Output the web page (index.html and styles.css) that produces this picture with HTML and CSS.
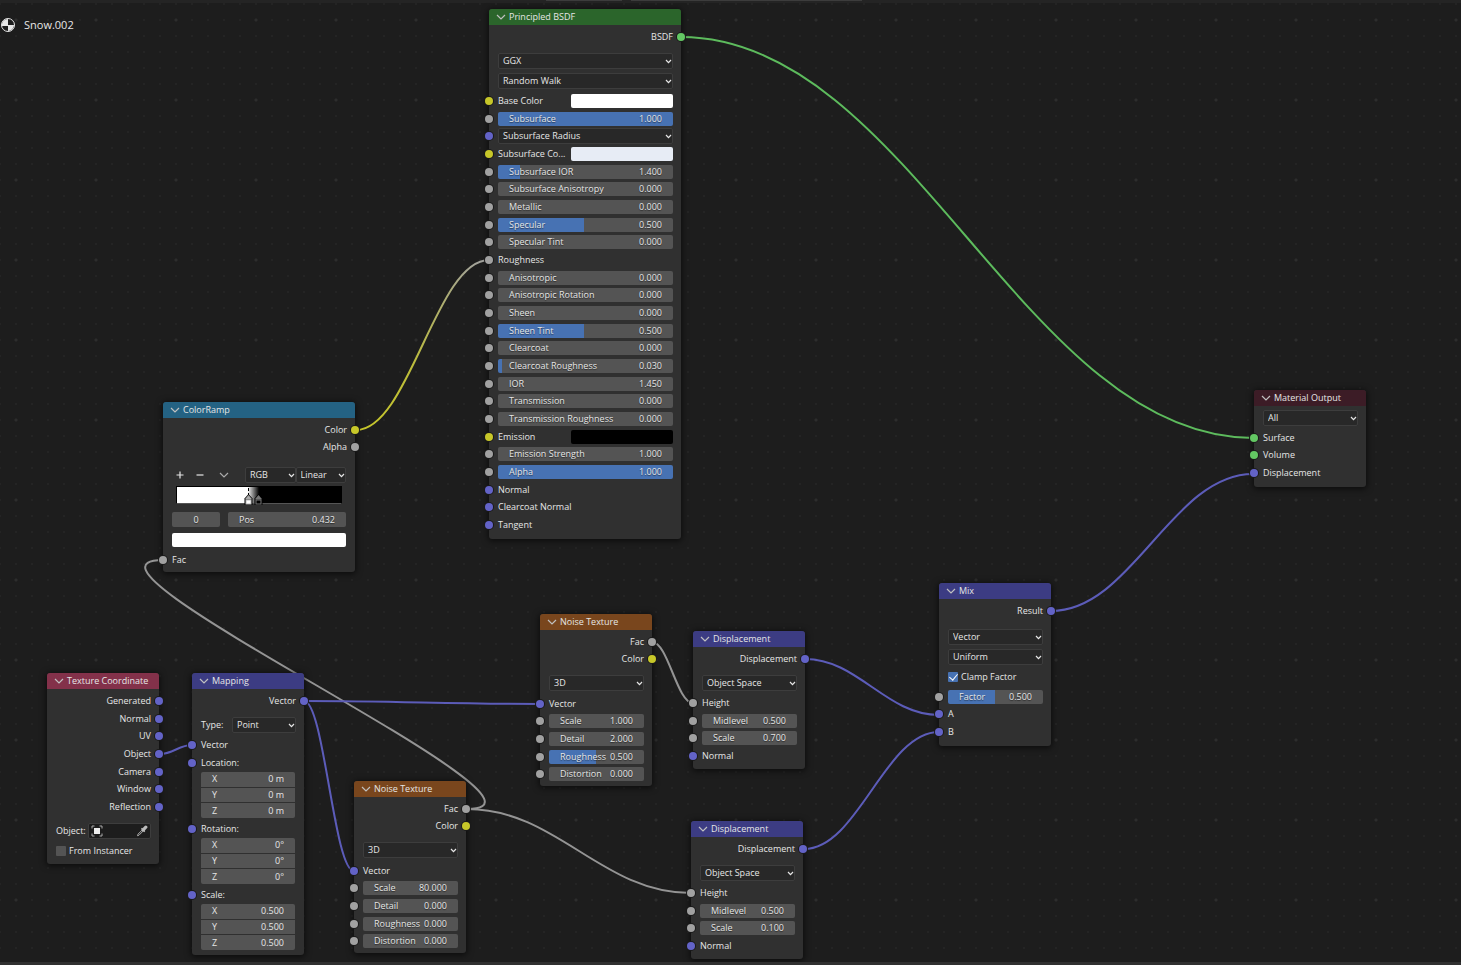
FILE: index.html
```html
<!DOCTYPE html>
<html lang="en">
<head>
<meta charset="utf-8">
<title>Snow.002 – Shader Editor</title>
<link rel="stylesheet" href="styles.css">
</head>
<body>
<svg class="symbols" aria-hidden="true">
  <symbol id="fold" viewBox="0 0 10 8"><path d="M1 2 L5 6 L9 2" fill="none" stroke="currentColor" stroke-width="1.2"/></symbol>
  <symbol id="caret" viewBox="0 0 7 5"><path d="M1 1 L3.5 3.7 L6 1" fill="none" stroke="currentColor" stroke-width="1.2"/></symbol>
</svg>
<main class="editor">
  <svg class="links" aria-hidden="true">
    <defs>
      <linearGradient id="mixlink" gradientUnits="userSpaceOnUse" x1="356" y1="430" x2="489" y2="260">
        <stop offset="0" stop-color="#c7c729"/><stop offset="0.4" stop-color="#bcbc3c"/><stop offset="1" stop-color="#a1a1a1"/>
      </linearGradient>
    </defs>
    <path class="shader" d="M681 37 C909 37 1025 438 1253 438"/>
    <path stroke="url(#mixlink)" d="M356 430 C409 430 436 260 489 260"/>
    <path class="value" d="M467 809 C589 809 41 560 163 560"/>
    <path class="value" d="M467 809 C557 809 601 893 691 893"/>
    <path class="value" d="M652 642 C668 642 677 703 693 703"/>
    <path class="vector" d="M160 754 C173 754 179 745 192 745"/>
    <path class="vector" d="M304 701 C398 701 446 704 540 704"/>
    <path class="vector" d="M304 701 C324 701 334 871 354 871"/>
    <path class="vector" d="M805 659 C858 659 886 715 939 715"/>
    <path class="vector" d="M804 849 C858 849 885 732 939 732"/>
    <path class="vector" d="M1051 611 C1132 611 1172 474 1253 474"/>
  </svg>

  <div class="material">
    <svg width="14" height="14" viewBox="0 0 14 14" aria-hidden="true"><circle cx="7" cy="7" r="6.5" fill="#1d1d1d" stroke="#e6e6e6"/><path d="M1 8 A6 6 0 0 1 7 1 V8 Z M7 7 H13 A6 6 0 0 1 7 13 Z" fill="#e6e6e6"/></svg>
    <span>Snow.002</span>
  </div>

  <section class="node wide principled">
    <h2 class="head green"><svg><use href="#fold"/></svg>Principled BSDF</h2>
    <div class="sockets n1"><div class="row out s-shader">BSDF</div></div>
    <div class="options">
      <div class="opt"><label class="drop"><select aria-label="Distribution"><option>GGX</option></select><svg><use href="#caret"/></svg></label></div>
      <div class="opt"><label class="drop"><select aria-label="Subsurface method"><option>Random Walk</option></select><svg><use href="#caret"/></svg></label></div>
    </div>
    <div class="sockets n25">
      <div class="row in s-color"><label for="base">Base Color</label><input type="color" id="base" value="#ffffff"></div>
      <div class="row in s-value"><label class="num full"><span>Subsurface</span><input value="1.000"></label></div>
      <div class="row in s-vector"><label class="drop"><select aria-label="Subsurface Radius"><option>Subsurface Radius</option></select><svg><use href="#caret"/></svg></label></div>
      <div class="row in s-color"><label for="subc">Subsurface Co...</label><input type="color" id="subc" value="#e7ecf5"></div>
      <div class="row in s-value"><label class="num" style="--fill:12.5%"><span>Subsurface IOR</span><input value="1.400"></label></div>
      <div class="row in s-value"><label class="num"><span>Subsurface Anisotropy</span><input value="0.000"></label></div>
      <div class="row in s-value"><label class="num"><span>Metallic</span><input value="0.000"></label></div>
      <div class="row in s-value"><label class="num half"><span>Specular</span><input value="0.500"></label></div>
      <div class="row in s-value"><label class="num"><span>Specular Tint</span><input value="0.000"></label></div>
      <div class="row in s-value">Roughness</div>
      <div class="row in s-value"><label class="num"><span>Anisotropic</span><input value="0.000"></label></div>
      <div class="row in s-value"><label class="num"><span>Anisotropic Rotation</span><input value="0.000"></label></div>
      <div class="row in s-value"><label class="num"><span>Sheen</span><input value="0.000"></label></div>
      <div class="row in s-value"><label class="num half"><span>Sheen Tint</span><input value="0.500"></label></div>
      <div class="row in s-value"><label class="num"><span>Clearcoat</span><input value="0.000"></label></div>
      <div class="row in s-value"><label class="num" style="--fill:2.5%"><span>Clearcoat Roughness</span><input value="0.030"></label></div>
      <div class="row in s-value"><label class="num"><span>IOR</span><input value="1.450"></label></div>
      <div class="row in s-value"><label class="num"><span>Transmission</span><input value="0.000"></label></div>
      <div class="row in s-value"><label class="num"><span>Transmission Roughness</span><input value="0.000"></label></div>
      <div class="row in s-color"><label for="emis">Emission</label><input type="color" id="emis" value="#000000"></div>
      <div class="row in s-value"><label class="num"><span>Emission Strength</span><input value="1.000"></label></div>
      <div class="row in s-value"><label class="num full"><span>Alpha</span><input value="1.000"></label></div>
      <div class="row in s-vector">Normal</div>
      <div class="row in s-vector">Clearcoat Normal</div>
      <div class="row in s-vector">Tangent</div>
    </div>
  </section>

  <section class="node wide ramp-node">
    <h2 class="head blue"><svg><use href="#fold"/></svg>ColorRamp</h2>
    <div class="sockets n2"><div class="row out s-color">Color</div><div class="row out s-value">Alpha</div></div>
    <div class="ramp-tools">
      <button aria-label="Add stop"><svg viewBox="0 0 8 8"><path d="M4 0.5V7.5M0.5 4H7.5" stroke="currentColor" stroke-width="1.2"/></svg></button>
      <button aria-label="Remove stop"><svg viewBox="0 0 8 8"><path d="M0.5 4H7.5" stroke="currentColor" stroke-width="1.2"/></svg></button>
      <button class="more" aria-label="Ramp tools"><svg viewBox="0 0 10 8"><use href="#fold"/></svg></button>
      <label class="drop"><select aria-label="Color mode"><option>RGB</option></select><svg><use href="#caret"/></svg></label>
      <label class="drop"><select aria-label="Interpolation"><option>Linear</option></select><svg><use href="#caret"/></svg></label>
    </div>
    <div class="ramp">
      <svg class="stops" width="20" height="18" viewBox="0 0 20 18" aria-hidden="true">
        <path d="M5.5 1V9" stroke="#000" stroke-dasharray="3 2"/>
        <path d="M15.500 7 L19.500 11.500 V18 H11.500 V11.500 Z" fill="#000"/><path d="M15.500 8 L18.500 11.500 V12.500 H12.500 V11.500 Z" fill="#777"/><rect x="13" y="13" width="5" height="4" fill="#000" stroke="#777"/>
        <path d="M5.500 7 L9.500 11.500 V18 H1.500 V11.500 Z" fill="#000"/><path d="M5.500 8 L8.500 11.500 V12.500 H2.500 V11.500 Z" fill="#aaa"/><rect x="3" y="13" width="5" height="4" fill="#fff" stroke="#bbb"/>
      </svg>
    </div>
    <div class="ramp-pos"><label class="num index"><input aria-label="Stop" value="0"></label><label class="num"><span>Pos</span><input value="0.432"></label></div>
    <input class="stop-color" type="color" aria-label="Stop color" value="#ffffff">
    <div class="sockets n1"><div class="row in s-value">Fac</div></div>
  </section>

  <section class="node texcoord">
    <h2 class="head red"><svg><use href="#fold"/></svg>Texture Coordinate</h2>
    <div class="sockets n7">
      <div class="row out s-vector">Generated</div><div class="row out s-vector">Normal</div><div class="row out s-vector">UV</div><div class="row out s-vector">Object</div><div class="row out s-vector">Camera</div><div class="row out s-vector">Window</div><div class="row out s-vector">Reflection</div>
    </div>
    <div class="options">
      <div class="opt"><span class="tag">Object:</span>
        <button class="picker" aria-label="Pick object">
          <svg width="12" height="12" viewBox="0 0 12 12"><path d="M1 3.5V1H3.5M8.500 1H11V3.500M11 8.500V11H8.500M3.500 11H1V8.500" fill="none" stroke="#aaa"/><rect x="3" y="3" width="6" height="6" fill="#eee"/></svg>
          <svg width="12" height="12" viewBox="0 0 12 12"><path d="M7 4.200 L2 9.200 L1.500 10.700 L3 10.200 L8 5.200" fill="none" stroke="#aaa"/><path d="M5.500 3.300 L8.800 6.600" stroke="#bbb" stroke-width="1.500"/><path d="M7.200 4.800 L9.800 2.200" stroke="#bbb" stroke-width="3.200" stroke-linecap="round"/></svg>
        </button></div>
      <div class="opt"><label class="check"><input type="checkbox">From Instancer</label></div>
    </div>
  </section>

  <section class="node mapping">
    <h2 class="head purple"><svg><use href="#fold"/></svg>Mapping</h2>
    <div class="sockets n1"><div class="row out s-vector">Vector</div></div>
    <div class="options"><div class="opt"><label class="tag" for="maptype">Type:</label><span class="drop"><select id="maptype"><option>Point</option></select><svg><use href="#caret"/></svg></span></div></div>
    <div class="sockets n1"><div class="row in s-vector">Vector</div></div>
    <div class="sockets n1"><div class="row in s-vector">Location:</div></div>
    <div class="xyz"><label><span>X</span><input value="0 m"></label><label><span>Y</span><input value="0 m"></label><label><span>Z</span><input value="0 m"></label></div>
    <div class="sockets n1"><div class="row in s-vector">Rotation:</div></div>
    <div class="xyz"><label><span>X</span><input value="0°"></label><label><span>Y</span><input value="0°"></label><label><span>Z</span><input value="0°"></label></div>
    <div class="sockets n1"><div class="row in s-vector">Scale:</div></div>
    <div class="xyz"><label><span>X</span><input value="0.500"></label><label><span>Y</span><input value="0.500"></label><label><span>Z</span><input value="0.500"></label></div>
  </section>

  <section class="node noise noise-a">
    <h2 class="head orange"><svg><use href="#fold"/></svg>Noise Texture</h2>
    <div class="sockets n2"><div class="row out s-value">Fac</div><div class="row out s-color">Color</div></div>
    <div class="options"><div class="opt"><label class="drop"><select aria-label="Dimensions"><option>3D</option></select><svg><use href="#caret"/></svg></label></div></div>
    <div class="sockets n5">
      <div class="row in s-vector">Vector</div>
      <div class="row in s-value"><label class="num"><span>Scale</span><input value="80.000"></label></div>
      <div class="row in s-value"><label class="num"><span>Detail</span><input value="0.000"></label></div>
      <div class="row in s-value"><label class="num"><span>Roughness</span><input value="0.000"></label></div>
      <div class="row in s-value"><label class="num"><span>Distortion</span><input value="0.000"></label></div>
    </div>
  </section>

  <section class="node noise noise-b">
    <h2 class="head orange"><svg><use href="#fold"/></svg>Noise Texture</h2>
    <div class="sockets n2"><div class="row out s-value">Fac</div><div class="row out s-color">Color</div></div>
    <div class="options"><div class="opt"><label class="drop"><select aria-label="Dimensions"><option>3D</option></select><svg><use href="#caret"/></svg></label></div></div>
    <div class="sockets n5">
      <div class="row in s-vector">Vector</div>
      <div class="row in s-value"><label class="num"><span>Scale</span><input value="1.000"></label></div>
      <div class="row in s-value"><label class="num"><span>Detail</span><input value="2.000"></label></div>
      <div class="row in s-value"><label class="num half"><span>Roughness</span><input value="0.500"></label></div>
      <div class="row in s-value"><label class="num"><span>Distortion</span><input value="0.000"></label></div>
    </div>
  </section>

  <section class="node disp disp-a">
    <h2 class="head purple"><svg><use href="#fold"/></svg>Displacement</h2>
    <div class="sockets n1"><div class="row out s-vector">Displacement</div></div>
    <div class="options"><div class="opt"><label class="drop"><select aria-label="Space"><option>Object Space</option></select><svg><use href="#caret"/></svg></label></div></div>
    <div class="sockets n4">
      <div class="row in s-value">Height</div>
      <div class="row in s-value"><label class="num"><span>Midlevel</span><input value="0.500"></label></div>
      <div class="row in s-value"><label class="num"><span>Scale</span><input value="0.700"></label></div>
      <div class="row in s-vector">Normal</div>
    </div>
  </section>

  <section class="node disp disp-b">
    <h2 class="head purple"><svg><use href="#fold"/></svg>Displacement</h2>
    <div class="sockets n1"><div class="row out s-vector">Displacement</div></div>
    <div class="options"><div class="opt"><label class="drop"><select aria-label="Space"><option>Object Space</option></select><svg><use href="#caret"/></svg></label></div></div>
    <div class="sockets n4">
      <div class="row in s-value">Height</div>
      <div class="row in s-value"><label class="num"><span>Midlevel</span><input value="0.500"></label></div>
      <div class="row in s-value"><label class="num"><span>Scale</span><input value="0.100"></label></div>
      <div class="row in s-vector">Normal</div>
    </div>
  </section>

  <section class="node mix">
    <h2 class="head purple"><svg><use href="#fold"/></svg>Mix</h2>
    <div class="sockets n1"><div class="row out s-vector">Result</div></div>
    <div class="options">
      <div class="opt"><label class="drop"><select aria-label="Data type"><option>Vector</option></select><svg><use href="#caret"/></svg></label></div>
      <div class="opt"><label class="drop"><select aria-label="Factor mode"><option>Uniform</option></select><svg><use href="#caret"/></svg></label></div>
      <div class="opt"><label class="check"><input type="checkbox" checked>Clamp Factor</label></div>
    </div>
    <div class="sockets n3">
      <div class="row in s-value"><label class="num half"><span>Factor</span><input value="0.500"></label></div>
      <div class="row in s-vector">A</div>
      <div class="row in s-vector">B</div>
    </div>
  </section>

  <section class="node output">
    <h2 class="head maroon"><svg><use href="#fold"/></svg>Material Output</h2>
    <div class="options"><div class="opt"><label class="drop"><select aria-label="Target"><option>All</option></select><svg><use href="#caret"/></svg></label></div></div>
    <div class="sockets n3">
      <div class="row in s-shader">Surface</div>
      <div class="row in s-shader">Volume</div>
      <div class="row in s-vector">Displacement</div>
    </div>
  </section>
</main>
</body>
</html>
```
FILE: styles.css
```css
* { box-sizing: border-box; }

body {
  margin: 0;
  background: #1d1d1d;
  color: #e6e6e6;
  font: 9px/12px "Open Sans", "Noto Sans", sans-serif;
}

.symbols { display: none; }

/* Canvas with its dot grid; the first two layers are the header edge */
.editor {
  position: relative;
  height: 100vh;
  overflow: hidden;
  border-bottom: 3px solid #303030;
  background-color: #1d1d1d;
  background-image:
    linear-gradient(to right, transparent 546px, #3c3c3c 546px, #3c3c3c 622px, transparent 622px, transparent 631px, #3c3c3c 631px, #3c3c3c 862px, transparent 862px),
    linear-gradient(#242424, #242424),
    radial-gradient(circle, #2d2d2d 1px, transparent 2px),
    radial-gradient(circle, #242424 1px, transparent 1px);
  background-size: 100% 1px, 100% 3px, 80px 80px, 16px 16px;
  background-position: 0 0, 0 0, 56px 60px, 8px 12px;
  background-repeat: no-repeat, no-repeat, repeat, repeat;
}

.links {
  position: absolute;
  top: 0;
  left: 0;
  width: 100%;
  height: 100%;
  overflow: visible;
  fill: none;
  stroke-width: 2px;
}
.links .shader { stroke: #5dbb5d; }
.links .value { stroke: #949494; }
.links .vector { stroke: #5c5cb9; }

.material {
  display: flex;
  align-items: center;
  gap: 9px;
  padding: 17px 1px;
  font-size: 11px;
  line-height: 16px;
}

/* Nodes: free placement on the canvas */
.node {
  position: absolute;
  width: 112px;
  padding-bottom: 5px;
  border-radius: 3px;
  background: #303030;
  box-shadow: 0 1px 6px 1px rgba(0, 0, 0, 0.6);
}
.wide { width: 192px; }

.principled { left: 489px; top: 9px; }
.ramp-node { left: 163px; top: 402px; padding-bottom: 3px; }
.texcoord { left: 47px; top: 673px; padding-bottom: 2px; }
.mapping { left: 192px; top: 673px; }
.noise-a { left: 354px; top: 781px; }
.noise-b { left: 540px; top: 614px; }
.disp-a { left: 693px; top: 631px; }
.disp-b { left: 691px; top: 821px; }
.mix { left: 939px; top: 583px; }
.output { left: 1254px; top: 390px; }
.noise { padding-bottom: 3px; }
.disp { padding-bottom: 4px; }

.head {
  display: flex;
  align-items: center;
  gap: 3px;
  height: 16px;
  margin: 0 0 3px;
  padding-left: 7px;
  border-radius: 3px 3px 0 0;
  font-size: 9px;
  font-weight: 400;
}
.head svg { width: 10px; height: 8px; color: #c0c0c0; }
.green { background: #2b652b; }
.blue { background: #246283; }
.red { background: #83314a; }
.purple { background: #3c3c83; }
.orange { background: #79461d; }
.maroon { background: #3c1c26; }

/* Socket rows share the height of their group evenly */
.sockets {
  display: grid;
  grid-auto-rows: 1fr;
  padding: 0 8px 0 9px;
}
.n1 { height: 18px; }
.n2 { height: 35px; }
.n3 { height: 53px; }
.n4 { height: 71px; }
.n5 { height: 88px; }
.n7 { height: 124px; }
.n25 { height: 442px; }

.row {
  position: relative;
  display: flex;
  align-items: center;
  min-height: 0;
}
.out { justify-content: flex-end; }
.row::before {
  content: "";
  position: absolute;
  top: calc(50% - 4px);
  width: 8px;
  height: 8px;
  border-radius: 50%;
  background: var(--socket);
  box-shadow: 0 0 0 1px #1a1a1a;
}
.in::before { left: -13px; }
.out::before { right: -12px; }
.s-shader { --socket: #63c763; }
.s-color { --socket: #c7c729; }
.s-value { --socket: #a1a1a1; }
.s-vector { --socket: #6363c7; }

.options { padding: 5px 8px 1px 9px; }
.mix .options { padding-top: 7px; }
.output .head { margin-bottom: 0; }
.output .options { padding-top: 2px; }
.noise .options { padding-bottom: 2px; }
.opt { display: flex; align-items: center; height: 20px; }

input, select, button {
  margin: 0;
  padding: 0;
  border: 0;
  background: none;
  color: inherit;
  font: inherit;
}

.drop {
  position: relative;
  display: flex;
  flex: 1;
  min-width: 0;
}
.drop select {
  width: 100%;
  height: 16px;
  padding-left: 4px;
  border: 1px solid #3d3d3d;
  border-radius: 2px;
  background: #282828;
  appearance: none;
}
.drop svg {
  position: absolute;
  right: 1px;
  top: 6px;
  width: 7px;
  height: 5px;
  pointer-events: none;
}

.num {
  --fill: 0%;
  display: flex;
  flex: 1;
  align-items: center;
  min-width: 0;
  height: 14px;
  padding: 0 11px;
  border-radius: 2px;
  background: linear-gradient(to right, #4772b3 var(--fill), #545454 var(--fill));
  text-shadow: 0 1px 1px rgba(0, 0, 0, 0.5);
}
.num span { white-space: nowrap; }
.num input {
  flex: 1;
  width: 0;
  min-width: 0;
  text-align: right;
  text-shadow: inherit;
}
.half { --fill: 49%; }
.full { --fill: 100%; }

input[type="color"] {
  width: 102px;
  height: 14px;
  margin-left: auto;
  appearance: none;
}
input[type="color"]::-webkit-color-swatch-wrapper { padding: 0; }
input[type="color"]::-webkit-color-swatch { border: 0; border-radius: 2px; }

.tag { flex: none; width: 32px; }
.mapping .tag { width: 31px; }
.picker {
  display: flex;
  flex: 1;
  align-items: center;
  justify-content: space-between;
  height: 16px;
  padding: 0 2px;
  border: 1px solid #3d3d3d;
  border-radius: 2px;
  background: #1d1d1d;
}
.check { display: flex; align-items: center; gap: 3px; }
.check input {
  display: grid;
  place-items: center;
  width: 10px;
  height: 10px;
  border-radius: 1px;
  background: #545454;
  appearance: none;
}
.check input:checked { background: #4772b3; }
.check input:checked::after {
  content: "";
  width: 4px;
  height: 7px;
  margin-top: -2px;
  border: solid #fff;
  border-width: 0 1px 1px 0;
  transform: rotate(40deg);
}

.xyz {
  display: grid;
  grid-auto-rows: 1fr;
  gap: 1px;
  height: 46px;
  margin: 0 9px 2px;
  border-radius: 2px;
  overflow: hidden;
}
.xyz:last-child { margin-bottom: 0; }
.xyz label {
  display: flex;
  align-items: center;
  min-height: 0;
  padding: 0 11px;
  background: #545454;
}
.xyz input { flex: 1; width: 0; text-align: right; }

/* Color ramp */
.ramp-tools {
  display: flex;
  align-items: center;
  height: 20px;
  margin: 9px 9px 0;
}
.ramp-tools button { width: 16px; height: 16px; margin-right: 4px; }
.ramp-tools button svg { width: 8px; height: 8px; display: block; margin: auto; }
.ramp-tools .more { margin: 0 13px 0 4px; color: #aaa; }
.ramp-tools .more svg { width: 10px; }
.ramp {
  height: 18px;
  margin: 1px 13px 8px;
  border: 1px solid #000;
  border-bottom-color: #555;
  background: linear-gradient(to right, #fff 43%, #000 50%);
}
.stops { display: block; margin-left: 66px; }
.ramp-pos { display: flex; gap: 8px; margin: 0 9px 6px; }
.ramp-pos .num { height: 15px; }
.ramp-pos .index { flex: none; width: 48px; }
.ramp-pos .index input { text-align: center; }
.ramp-node .stop-color { display: block; width: auto; min-width: calc(100% - 18px); margin: 0 9px 4px; }
```
